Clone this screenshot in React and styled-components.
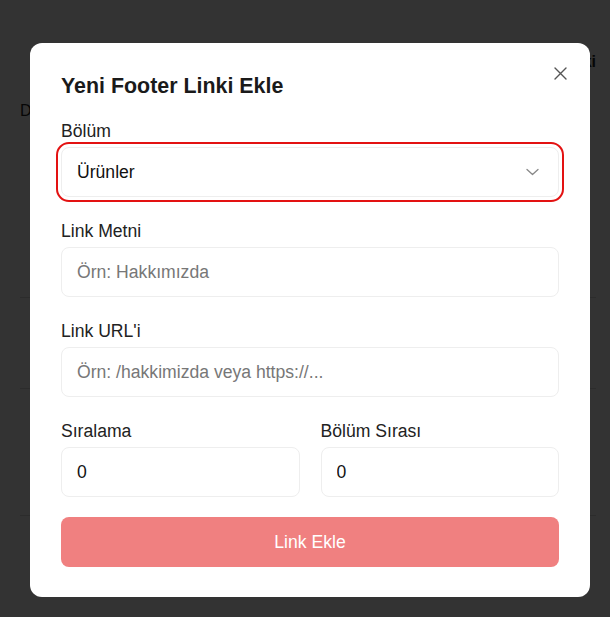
import React from "react";
import styled, { createGlobalStyle } from "styled-components";

const GlobalStyle = createGlobalStyle`
  html, body {
    margin: 0;
    padding: 0;
    background: #ffffff;
  }
  * {
    box-sizing: border-box;
  }
`;

const Page = styled.div`
  font-family: "Liberation Sans", Arial, sans-serif;
  min-height: 617px;
  padding: 0 14px 0 20px;
  color: #222;
`;

const TopBar = styled.div`
  display: flex;
  justify-content: flex-end;
  padding-top: 50px;
  line-height: 24px;
  font-size: 16px;
  font-weight: 600;
`;

const Table = styled.div`
  margin-top: 22px;
`;

const Row = styled.div`
  display: flex;
  align-items: flex-start;
  height: ${(p) => p.$h}px;
  padding: 4px 0;
  line-height: 22px;
  font-size: 16px;
  border-bottom: ${(p) => (p.$line ? "1px solid #dcdcdc" : "none")};
`;

const Overlay = styled.div`
  position: fixed;
  inset: 0;
  background: rgba(0, 0, 0, 0.8);
  display: flex;
  justify-content: flex-start;
  align-items: flex-start;
  padding: 43px 20px 0 30px;
`;

const Modal = styled.div`
  position: relative;
  width: 560px;
  background: #fff;
  border-radius: 12px;
  padding: 31px 31px 30px;
  font-family: "Liberation Sans", Arial, sans-serif;
`;

const Title = styled.h2`
  margin: 0 0 22px;
  font-size: 21.4px;
  line-height: 25px;
  font-weight: 700;
  color: #1a1a1a;
`;

const CloseButton = styled.button`
  position: absolute;
  top: 18px;
  right: 18px;
  width: 24px;
  height: 24px;
  border: none;
  background: transparent;
  padding: 0;
  display: flex;
  align-items: center;
  justify-content: center;
  cursor: pointer;
`;

const Fields = styled.div`
  display: flex;
  flex-direction: column;
  gap: 24px;
`;

const Field = styled.div`
  display: flex;
  flex-direction: column;
`;

const Grid = styled.div`
  display: grid;
  grid-template-columns: 1fr 1fr;
  gap: 21px;
`;

const Label = styled.label`
  font-size: 17.6px;
  line-height: 20px;
  margin-bottom: 6px;
  color: #222;
`;

const Input = styled.input`
  height: 50px;
  width: 100%;
  border: 1px solid #eeeeee;
  border-radius: 8px;
  padding: 0 15px;
  font-family: inherit;
  font-size: 17.6px;
  color: #111;
  background: #fff;
  outline: none;

  &::placeholder {
    color: #777;
  }
`;

const SelectWrap = styled.div`
  position: relative;
  height: 50px;
`;

const Select = styled.select`
  appearance: none;
  width: 100%;
  height: 50px;
  border: 1px solid #eeeeee;
  border-radius: 8px;
  padding: 0 15px;
  font-family: inherit;
  font-size: 17.6px;
  color: #111;
  background: #fff;
  outline: 2px solid #e31212;
  outline-offset: 3px;
`;

const Chevron = styled.svg`
  position: absolute;
  right: 20px;
  top: 50%;
  transform: translateY(-50%);
  pointer-events: none;
`;

const SubmitButton = styled.button`
  margin-top: 20px;
  width: 100%;
  height: 50px;
  border: none;
  border-radius: 8px;
  background: #f08080;
  color: #fff;
  font-family: inherit;
  font-size: 17.6px;
  font-weight: 500;
  cursor: pointer;
`;

export default function App() {
  return (
    <>
      <GlobalStyle />
      <Page>
        <TopBar>
          <span>+ Yeni Footer Linki</span>
        </TopBar>
        <Table>
          <Row $h={30}>Durum</Row>
          <Row $h={172} $line />
          <Row $h={91} $line />
          <Row $h={127} $line />
        </Table>
      </Page>

      <Overlay>
        <Modal>
          <CloseButton aria-label="Kapat">
            <svg width="13" height="13" viewBox="0 0 13 13" fill="none">
              <path d="M1 1L12 12M12 1L1 12" stroke="#555" strokeWidth="1.4" strokeLinecap="round" />
            </svg>
          </CloseButton>
          <Title>Yeni Footer Linki Ekle</Title>

          <Fields>
            <Field>
              <Label>Bölüm</Label>
              <SelectWrap>
                <Select defaultValue="urunler">
                  <option value="urunler">Ürünler</option>
                  <option value="kurumsal">Kurumsal</option>
                  <option value="destek">Destek</option>
                </Select>
                <Chevron width="13" height="8" viewBox="0 0 13 8" fill="none">
                  <path d="M1 1.5L6.5 6.5L12 1.5" stroke="#888" strokeWidth="1.3" strokeLinecap="round" strokeLinejoin="round" />
                </Chevron>
              </SelectWrap>
            </Field>

            <Field>
              <Label>Link Metni</Label>
              <Input placeholder="Örn: Hakkımızda" />
            </Field>

            <Field>
              <Label>Link URL'i</Label>
              <Input placeholder="Örn: /hakkimizda veya https://..." />
            </Field>

            <Grid>
              <Field>
                <Label>Sıralama</Label>
                <Input type="number" defaultValue="0" />
              </Field>
              <Field>
                <Label>Bölüm Sırası</Label>
                <Input type="number" defaultValue="0" />
              </Field>
            </Grid>
          </Fields>

          <SubmitButton>Link Ekle</SubmitButton>
        </Modal>
      </Overlay>
    </>
  );
}
